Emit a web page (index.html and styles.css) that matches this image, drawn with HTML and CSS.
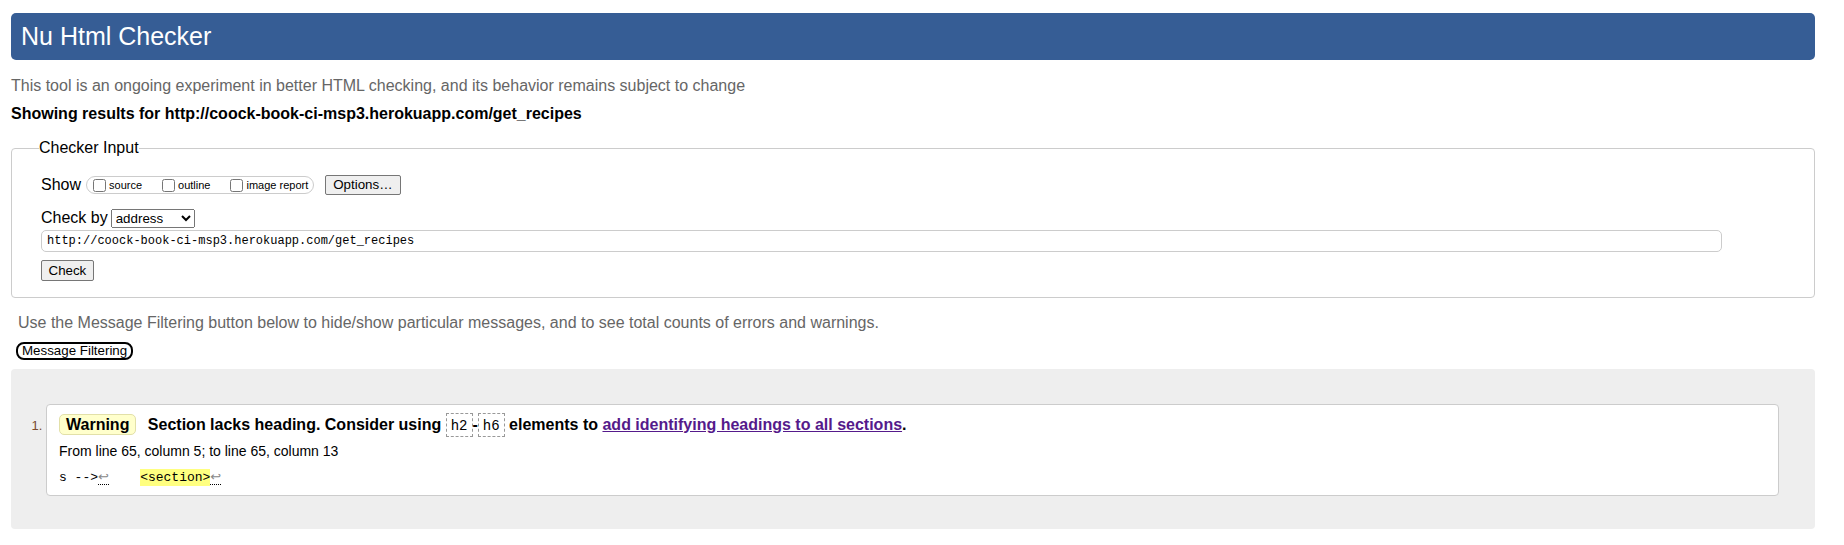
FILE: index.html
```
<!DOCTYPE html>
<html lang="en">
<head>
<meta charset="utf-8">
<title>Nu Html Checker</title>
<link rel="stylesheet" href="styles.css">
</head>
<body>
<h1 class="title">Nu Html Checker</h1>
<p class="intro">This tool is an ongoing experiment in better HTML checking, and its behavior remains subject to change</p>
<p class="showing">Showing results for http://coock-book-ci-msp3.herokuapp.com/get_recipes</p>
<form class="checker">
<fieldset class="inputs">
<legend class="inputs-legend">Checker Input</legend>
<div class="row show-row">
  <span class="label">Show</span>
  <span class="show-group">
    <label class="opt"><input type="checkbox" class="cb"><span>source</span></label>
    <label class="opt"><input type="checkbox" class="cb"><span>outline</span></label>
    <label class="opt"><input type="checkbox" class="cb"><span>image report</span></label>
  </span>
  <button type="button" class="btn options">Options…</button>
</div>
<div class="row by-row">
  <span class="label">Check by</span>
  <select class="by-select"><option>address</option></select>
</div>
<input class="url" type="text" value="http://coock-book-ci-msp3.herokuapp.com/get_recipes">
<div class="submit-row"><button type="button" class="btn check">Check</button></div>
</fieldset>
</form>
<p class="filter-note">Use the Message Filtering button below to hide/show particular messages, and to see total counts of errors and warnings.</p>
<div class="filter-bar"><button type="button" class="filter-btn">Message Filtering</button></div>
<div class="results">
<ol class="messages">
<li class="msg">
<p class="msg-text"><strong class="badge">Warning</strong> <span class="msg-body">Section lacks heading. Consider using <code class="el">h2</code>-<code class="el">h6</code> elements to <a href="#" class="msg-link">add identifying headings to all sections</a>.</span></p>
<p class="location">From line 65, column 5; to line 65, column 13</p>
<p class="extract"><code class="ext-code">s --&gt;<span class="lf">↩</span>    <mark class="hl">&lt;section&gt;</mark><span class="lf">↩</span></code></p>
</li>
</ol>
</div>
</body>
</html>
```

FILE: styles.css
```
* { box-sizing: border-box; }
html { background: #fff; }
body {
  margin: 0;
  padding: 13px 29px 0 11px;
  font-family: "Liberation Sans", Arial, sans-serif;
  font-size: 16px;
  color: #000;
}
.title {
  margin: 0;
  height: 47px;
  padding: 0 10px;
  background: #365d95;
  color: #fff;
  border-radius: 5px;
  font-size: 25px;
  font-weight: normal;
  line-height: 47px;
}
.intro { margin: 16px 0 0; line-height: 20px; color: #666; }
.showing { margin: 8px 0 0; line-height: 20px; font-weight: bold; }
.checker { margin: 14px 0 0; }
.inputs {
  margin: 0;
  padding: 17px 29px 16px;
  border: 1px solid #ccc;
  border-radius: 4px;
  min-width: 0;
}
.inputs-legend { padding: 0; margin-left: -2px; line-height: 20px; font-size: 16px; }
.row { display: flex; align-items: center; height: 20px; }
.by-row { margin-top: 13px; }
.label { line-height: 20px; }
.show-group {
  display: inline-flex;
  align-items: center;
  height: 18px;
  margin-left: 5px;
  padding: 0 5px 0 2px;
  border: 1px solid #ccc;
  border-radius: 9px;
}
.opt { display: inline-flex; align-items: center; font-size: 11px; margin-right: 16px; }
.opt:last-child { margin-right: 0; }
.cb { width: 13px; height: 13px; margin: 0 3px 0 4px; }
.btn {
  font-family: inherit;
  font-size: 13.33px;
  height: 20px;
  padding: 0 7px;
  border: 1px solid #767676;
  border-radius: 2px;
  background: #efefef;
  color: #000;
  line-height: 18px;
}
.options { margin-left: 11px; }
.by-select { margin-left: 3px; width: 84px; height: 19px; font-family: inherit; font-size: 13.33px; }
.url {
  display: block;
  margin-top: 2px;
  width: 1681px;
  height: 22px;
  padding: 0 5px;
  border: 1px solid #ccc;
  border-radius: 5px;
  font-family: "Liberation Mono", monospace;
  font-size: 12px;
  color: #000;
}
.submit-row { margin-top: 8px; display: flex; }
.check { height: 21px; padding: 0 6.5px; }
.filter-note { margin: 15px 0 0; padding-left: 7px; line-height: 20px; color: #666; }
.filter-bar { margin-top: 9px; padding-left: 5px; display: flex; }
.filter-btn {
  height: 18px;
  padding: 0 4px;
  border: 2px solid #000;
  border-radius: 8px;
  background: #fff;
  font-family: inherit;
  font-size: 13.33px;
  line-height: 14px;
  color: #000;
}
.results { margin-top: 9px; padding: 35px 36px 33px 35px; background: #eee; border-radius: 4px; }
.messages { margin: 0; padding: 0; }
.msg { padding: 8px 12px 8px; border: 1px solid #ccc; border-radius: 4px; background: #fff; }
.msg::marker { font-size: 13px; color: #7a4b2e; }
.msg-text { margin: 0; line-height: 24px; font-weight: bold; }
.badge {
  display: inline-block;
  margin-right: 7px;
  padding: 1px 6px;
  line-height: 17px;
  background: #ffffcc;
  border: 1px solid #e2e0a8;
  border-radius: 5px;
}
.el {
  font-family: "Liberation Mono", monospace;
  font-weight: normal;
  font-size: 14px;
  line-height: 14px;
  padding: 4px 4px 2px;
  border: 1px dashed #999;
}
.msg-link { color: #551a8b; }
.location { margin: 5px 0 0; font-size: 14px; line-height: 18px; }
.extract { margin: 8px 0 0; line-height: 18px; font-size: 13px; white-space: pre; }
.ext-code { font-family: "Liberation Mono", "DejaVu Sans Mono", monospace; font-size: 13px; line-height: 18px; }
.lf { font-family: "DejaVu Sans", sans-serif; font-size: 13px; color: #888; line-height: 13px; border-bottom: 1px dotted #000; }
.hl { background: #ffff80; color: #000; padding: 1px 0; line-height: 13px; }
```
